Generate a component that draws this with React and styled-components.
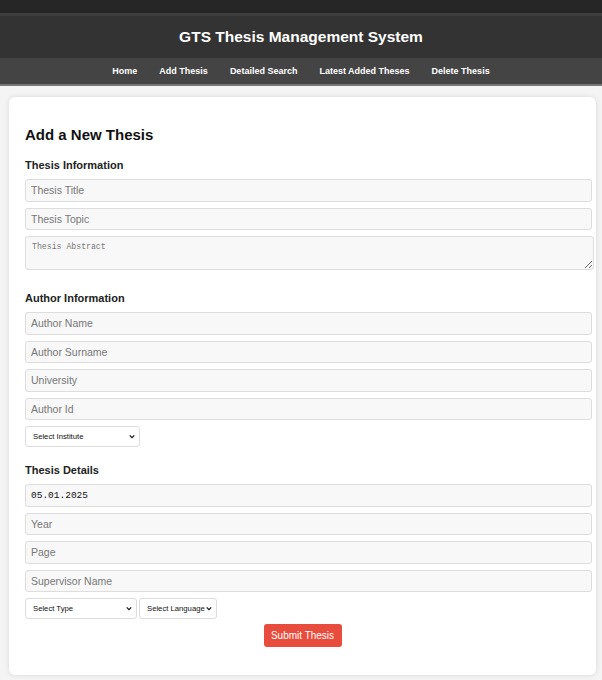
import React from "react";
import styled, { createGlobalStyle } from "styled-components";

const GlobalStyle = createGlobalStyle`
  body {
    margin: 0;
    background: #f4f4f4;
    font-family: "Liberation Sans", Arial, sans-serif;
  }
`;

const chevron =
  "data:image/svg+xml;utf8,<svg xmlns='http://www.w3.org/2000/svg' width='8' height='6' viewBox='0 0 8 6'><path d='M1 1.5 L4 4.5 L7 1.5' fill='none' stroke='%23111' stroke-width='1.6'/></svg>";

const Header = styled.header`
  background: #333;
  color: #fff;
  border-top: 13px solid #262626;
  box-shadow: inset 0 3px 0 #3e3e3e;
`;

const Title = styled.h1`
  margin: 0;
  padding: 14px 0 11px;
  font-size: 15.5px;
  line-height: 20px;
  text-align: center;
  font-weight: bold;
`;

const Nav = styled.nav`
  background: #444;
  border-bottom: 2px solid #777;
  display: flex;
  justify-content: center;
  height: 26px;
  align-items: center;
`;

const NavLink = styled.a`
  color: #fff;
  font-size: 9px;
  font-weight: bold;
  margin: 0 11px;
  text-decoration: none;
`;

const Card = styled.main`
  margin: 11px 6px 4px 9px;
  background: #fff;
  border-radius: 6px;
  box-shadow: 0 0 5px rgba(0, 0, 0, 0.12);
  padding: 16px 16px 28px;
`;

const Heading = styled.h2`
  margin: 13px 0 0;
  font-size: 15px;
  line-height: 18px;
  color: #111;
`;

const SectionTitle = styled.h3`
  margin: ${(p) => p.$top}px 0 ${(p) => p.$bottom}px;
  font-size: 11px;
  line-height: 14px;
  color: #222;
`;

const Group = styled.div`
  display: flex;
  flex-direction: column;
  gap: 6px;
  align-items: flex-start;
`;

const Input = styled.input`
  box-sizing: content-box;
  width: 100%;
  height: 20.5px;
  padding: 0 5px;
  border: 1px solid #ddd;
  border-radius: 3px;
  background: #f8f8f8;
  font-family: ${(p) => (p.$mono ? '"Liberation Mono", monospace' : '"Liberation Sans", Arial, sans-serif')};
  font-size: ${(p) => (p.$mono ? "9.5px" : "10.5px")};
  color: #111;
  &::placeholder {
    color: #777;
  }
`;

const TextArea = styled.textarea`
  box-sizing: content-box;
  width: 100%;
  height: 25px;
  padding: 5px 6px 2px;
  border: 1px solid #ddd;
  border-radius: 3px;
  background: #f8f8f8;
  font-family: "Liberation Mono", monospace;
  font-size: 8.2px;
  margin: 0;
  &::placeholder {
    color: #777;
  }
`;

const Select = styled.select`
  appearance: none;
  width: ${(p) => p.$w}px;
  height: 21px;
  border: 1px solid #ddd;
  border-radius: 3px;
  background: #fff url("${chevron}") no-repeat right 4px center / 6px 5px;
  font-family: "Liberation Sans", Arial, sans-serif;
  font-size: 7.7px;
  color: #111;
  padding: 0 9px 0 7px;
`;

const SelectRow = styled.div`
  display: flex;
  gap: 2px;
`;

const ButtonRow = styled.div`
  display: flex;
  justify-content: center;
  margin-top: 5px;
`;

const Submit = styled.button`
  background: #e74c3c;
  color: #fff;
  border: none;
  border-radius: 3px;
  width: 78px;
  height: 23px;
  padding: 0;
  white-space: nowrap;
  font-family: "Liberation Sans", Arial, sans-serif;
  font-size: 10px;
`;

function App() {
  return (
    <>
      <GlobalStyle />
      <Header>
        <Title>GTS Thesis Management System</Title>
        <Nav>
          <NavLink href="#">Home</NavLink>
          <NavLink href="#">Add Thesis</NavLink>
          <NavLink href="#">Detailed Search</NavLink>
          <NavLink href="#">Latest Added Theses</NavLink>
          <NavLink href="#">Delete Thesis</NavLink>
        </Nav>
      </Header>
      <Card>
        <Heading>Add a New Thesis</Heading>
        <SectionTitle $top={14} $bottom={7}>Thesis Information</SectionTitle>
        <Group>
          <Input placeholder="Thesis Title" />
          <Input placeholder="Thesis Topic" />
          <TextArea placeholder="Thesis Abstract" />
        </Group>
        <SectionTitle $top={21} $bottom={7}>Author Information</SectionTitle>
        <Group>
          <Input placeholder="Author Name" />
          <Input placeholder="Author Surname" />
          <Input placeholder="University" />
          <Input placeholder="Author Id" />
          <Select $w={115} defaultValue="">
            <option value="">Select Institute</option>
          </Select>
        </Group>
        <SectionTitle $top={16} $bottom={7}>Thesis Details</SectionTitle>
        <Group>
          <Input $mono defaultValue="05.01.2025" />
          <Input placeholder="Year" />
          <Input placeholder="Page" />
          <Input placeholder="Supervisor Name" />
          <SelectRow>
            <Select $w={112} defaultValue="">
              <option value="">Select Type</option>
            </Select>
            <Select $w={78} defaultValue="">
              <option value="">Select Language</option>
            </Select>
          </SelectRow>
        </Group>
        <ButtonRow>
          <Submit>Submit Thesis</Submit>
        </ButtonRow>
      </Card>
    </>
  );
}

export default App;
